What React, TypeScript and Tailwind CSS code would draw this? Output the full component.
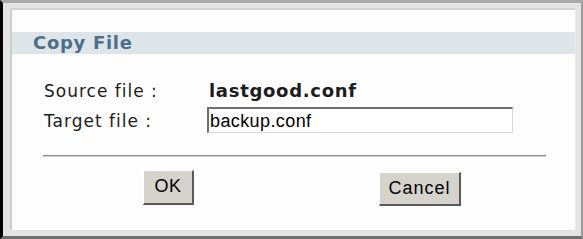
import { FC } from 'react';

const App: FC = () => {
  return (
    <div className="w-[583px] h-[239px] bg-[#e4e4e4] border-l-[3px] border-l-black border-t-[3px] border-t-[#a9a9a9] border-r-[2px] border-r-[#9c9c9c] border-b-[3px] border-b-[#707070] pl-[7px] pt-[5px] pr-[5px] pb-[6px] box-border">
      <div className="h-full bg-[#fdfdfd] border-l-2 border-l-[#cdcdcd] border-t-2 border-t-[#d4d4d4] border-r border-r-[#ececec] flex flex-col font-['DejaVu_Sans',sans-serif]">
        <div className="mt-[22px] h-[22px] bg-[#dde5e8] flex items-center pl-[21px]">
          <span className="text-[18px] font-bold text-[#4d6e8c] tracking-[0.7px] leading-none">Copy File</span>
        </div>

        <div className="mt-[26px] grid grid-cols-[165px_1fr] items-center pl-[32px] text-[17px] text-[#1c1c1c] tracking-[1px]">
          <div className="h-[22px] leading-[22px]">Source file :</div>
          <div className="h-[22px] leading-[22px] font-bold text-[18px] tracking-[0.7px]">lastgood.conf</div>
          <div className="mt-[5px] h-[26px] leading-[26px]">Target file :</div>
          <div className="mt-[5px] -ml-[2px]">
            <input
              defaultValue="backup.conf"
              className="w-[306px] h-[26px] border-t-2 border-l-2 border-t-[#6f6f6f] border-l-[#6f6f6f] border-b border-r border-b-[#d8d8d8] border-r-[#d8d8d8] bg-white pl-[1px] pt-[2px] font-['Liberation_Sans',Arial,sans-serif] text-[18px] tracking-[0.4px] text-black outline-none"
            />
          </div>
        </div>

        <div className="mt-[20px] ml-[31px] w-[503px] h-[2px] bg-[#8c8c8c] border-b border-b-[#d0d0d0]" />

        <div className="mt-[13px] flex items-start font-['Liberation_Sans',Arial,sans-serif] text-[18px] text-black">
          <button className="ml-[131px] w-[51px] h-[35px] bg-[#d6d3cc] border-t border-l border-t-white border-l-white border-r-2 border-b-2 border-r-[#5a5a5a] border-b-[#5a5a5a] tracking-[0.5px]">
            OK
          </button>
          <button className="ml-[185px] mt-[2px] w-[82px] h-[34px] bg-[#d6d3cc] border-t border-l border-t-white border-l-white border-r-2 border-b-2 border-r-[#5a5a5a] border-b-[#5a5a5a] tracking-[1px]">
            Cancel
          </button>
        </div>
      </div>
    </div>
  );
};

export default App;
